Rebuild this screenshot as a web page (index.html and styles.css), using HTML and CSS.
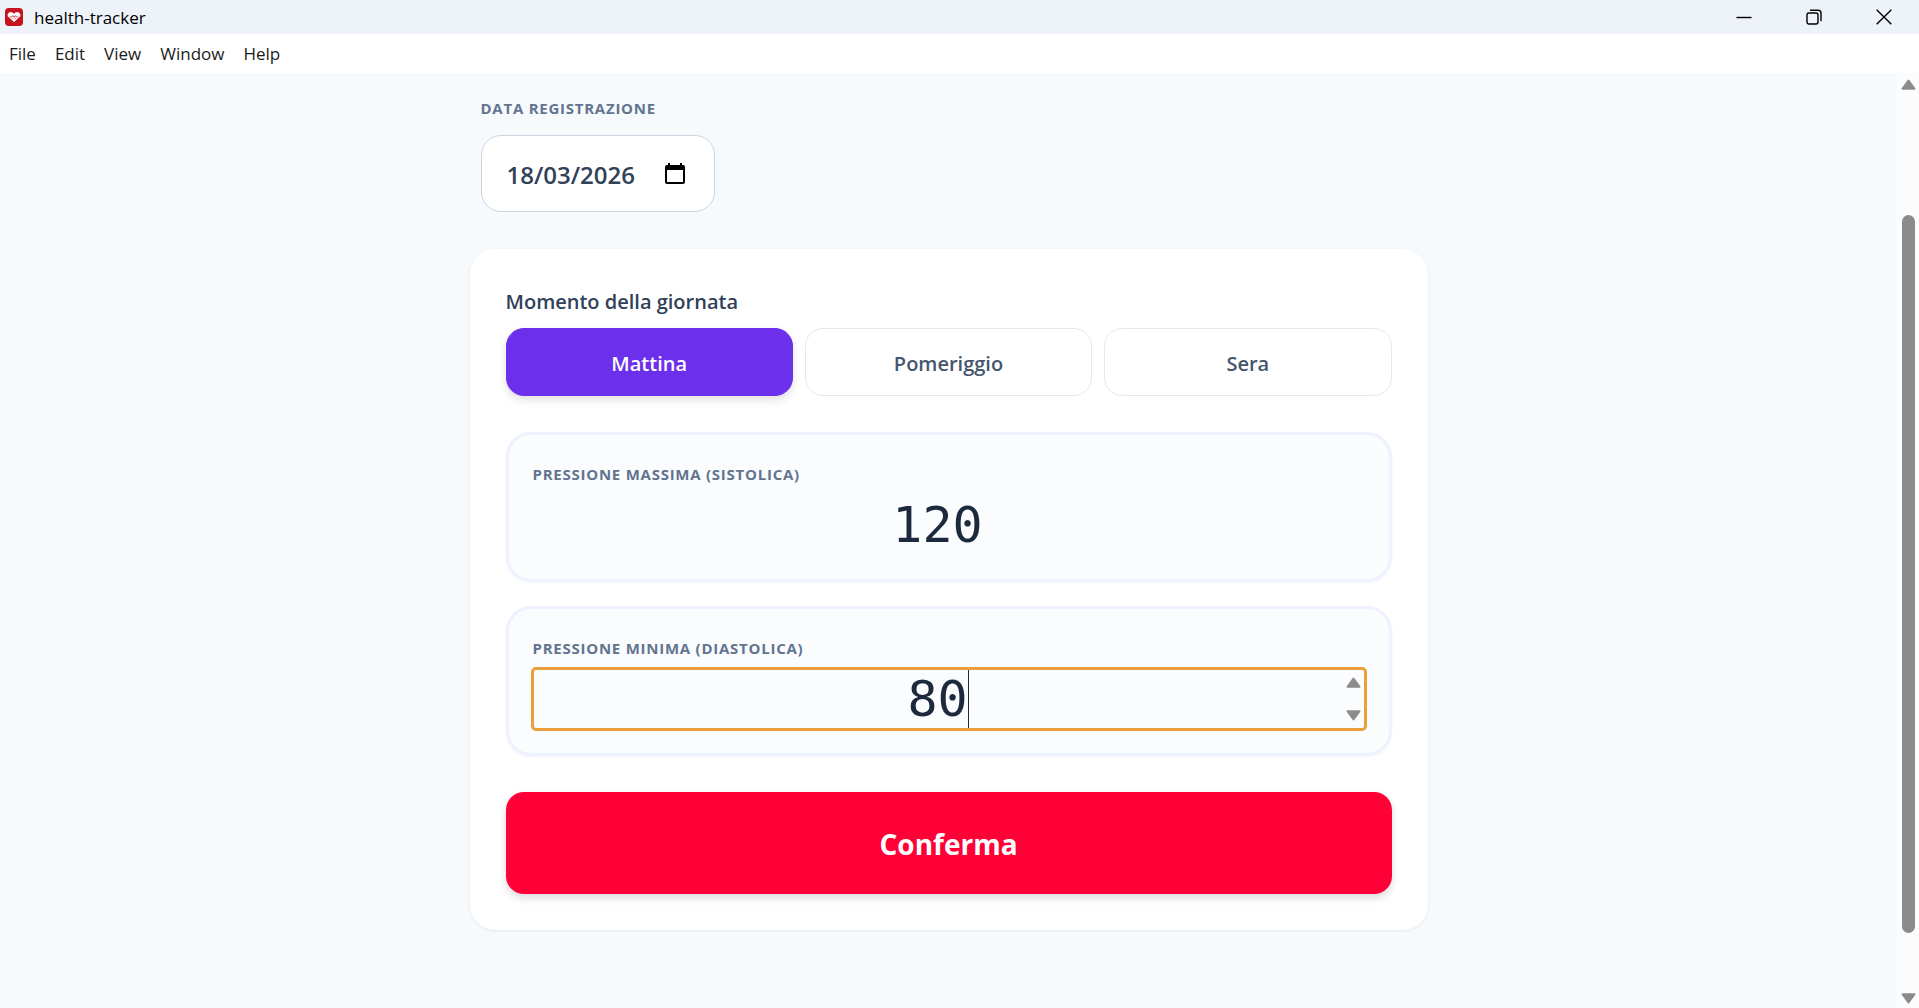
FILE: index.html
```html
<!DOCTYPE html>
<html lang="it">
<head>
<meta charset="utf-8">
<meta name="viewport" content="width=device-width, initial-scale=1">
<title>health-tracker</title>
<link rel="stylesheet" href="styles.css">
</head>
<body>
<header class="titlebar">
  <svg class="app-icon" viewBox="0 0 19 19" aria-hidden="true">
    <rect width="19" height="19" rx="4" fill="#c4141f"/>
    <path d="M4.500 4.500h3l2 1.500 2-1.500h3l1.700 2v2.300L9.500 14.800 2.800 8.800V6.500z" fill="#fff"/>
    <path d="M5 9.500h2l1.200-1.500 1.300 2 1.300-2 1.200 1.500h2M7.500 11l1 1M10.500 11.500l1-1" fill="none" stroke="#c4141f" stroke-width=".8"/>
  </svg>
  <h1 class="app-name">health-tracker</h1>
  <div class="window-controls">
    <button class="window-button" type="button" aria-label="Riduci a icona">
      <svg viewBox="0 0 16 16"><path d="M.5 8.500h15"/></svg>
    </button>
    <button class="window-button" type="button" aria-label="Ripristina">
      <svg viewBox="0 0 16 16"><rect x="1" y="4" width="11" height="11" rx="2"/><path d="M4 1.200h8a3 3 0 0 1 3 3v8"/></svg>
    </button>
    <button class="window-button" type="button" aria-label="Chiudi">
      <svg viewBox="0 0 16 16"><path d="M.7.7l14.600 14.600M15.300.7L.7 15.300"/></svg>
    </button>
  </div>
</header>
<nav class="menubar">
  <button class="menu-item" type="button">File</button>
  <button class="menu-item" type="button">Edit</button>
  <button class="menu-item" type="button">View</button>
  <button class="menu-item" type="button">Window</button>
  <button class="menu-item" type="button">Help</button>
</nav>
<div class="viewport">
  <main class="page">
    <form class="form">
      <div class="date-block">
        <label class="caption" for="date">DATA REGISTRAZIONE</label>
        <div class="date-field">
          <input class="date-input" id="date" type="text" inputmode="numeric" value="18/03/2026">
          <button class="date-picker" type="button" aria-label="Apri calendario">
            <svg viewBox="0 0 20 22"><path fill-rule="evenodd" d="M3 0h2v2h10V0h2v2h1a2 2 0 0 1 2 2v15a2 2 0 0 1-2 2H2a2 2 0 0 1-2-2V4a2 2 0 0 1 2-2h1zM2 7v12h16V7z"/></svg>
          </button>
        </div>
      </div>
      <section class="card">
        <fieldset class="moment">
          <legend class="moment-title">Momento della giornata</legend>
          <div class="moment-options">
            <button class="option option-active" type="button" aria-pressed="true">Mattina</button>
            <button class="option" type="button" aria-pressed="false">Pomeriggio</button>
            <button class="option" type="button" aria-pressed="false">Sera</button>
          </div>
        </fieldset>
        <div class="readings">
          <div class="reading">
            <label class="caption" for="sys">PRESSIONE MASSIMA (SISTOLICA)</label>
            <div class="number-field">
              <input class="number-input" id="sys" type="number" value="120">
            </div>
          </div>
          <div class="reading">
            <label class="caption" for="dia">PRESSIONE MINIMA (DIASTOLICA)</label>
            <div class="number-field number-field-focus">
              <input class="number-input" id="dia" type="number" value="80">
              <span class="caret"></span>
              <div class="spinner">
                <button class="spin" type="button" aria-label="Aumenta"><svg viewBox="0 0 15 11"><path d="M7.500 1.500L13.500 9.800h-12z"/></svg></button>
                <button class="spin" type="button" aria-label="Diminuisci"><svg viewBox="0 0 15 11"><path d="M7.500 9.500L1.500 1.200h12z"/></svg></button>
              </div>
            </div>
          </div>
        </div>
        <button class="confirm" type="submit">Conferma</button>
      </section>
    </form>
  </main>
  <div class="scrollbar" aria-hidden="true">
    <svg class="scroll-arrow" viewBox="0 0 15 11"><path d="M7.500 1.500L13.500 9.800h-12z"/></svg>
    <div class="scroll-track"><div class="scroll-thumb"></div></div>
    <svg class="scroll-arrow" viewBox="0 0 15 11"><path d="M7.500 9.500L1.500 1.200h12z"/></svg>
  </div>
</div>
</body>
</html>
```

FILE: styles.css
```css
* {
  box-sizing: border-box;
}

body {
  display: flex;
  flex-direction: column;
  height: 100vh;
  margin: 0;
  overflow: hidden;
  background: #fff;
  color: #314158;
  font-family: "Segoe UI", "Open Sans", "Noto Sans", sans-serif;
}

button,
input {
  margin: 0;
  padding: 0;
  border: 0;
  background: none;
  color: inherit;
  font: inherit;
}

svg {
  display: block;
}

/* Window chrome */
.titlebar {
  display: flex;
  flex: none;
  align-items: center;
  height: 34px;
  padding-left: 5px;
  background: #eef2f9;
}

.app-icon {
  width: 18px;
  height: 18px;
}

.app-name {
  margin: 0 auto 0 11px;
  color: #000;
  font-size: 17px;
  font-weight: 400;
}

.window-controls {
  display: flex;
}

.window-button {
  display: grid;
  place-items: center;
  width: 70px;
  height: 34px;
}

.window-button svg {
  width: 16px;
  height: 16px;
  fill: none;
  stroke: #000;
  stroke-width: 1.4;
}

.menubar {
  display: flex;
  flex: none;
  gap: 1px;
  align-items: center;
  height: 39px;
}

.menu-item {
  height: 39px;
  padding: 0 9px;
  color: #1b1b1b;
  font-size: 17px;
}

/* Scrolling area */
.viewport {
  display: flex;
  flex: 1;
  min-height: 0;
}

.page {
  flex: 1;
  padding: 23px 32px 0;
  overflow: hidden;
  background: #f6fafd;
}

.scrollbar {
  display: flex;
  flex-direction: column;
  flex: none;
  align-items: center;
  width: 22px;
  padding: 6px 0 4px;
  background: #fcfcfc;
}

.scroll-arrow,
.spin svg {
  width: 15px;
  height: 11px;
  fill: #8b8b8b;
  stroke: #8b8b8b;
  stroke-width: 2;
  stroke-linejoin: round;
}

.scroll-track {
  flex: 1;
  padding: 125px 0 60px;
}

.scroll-thumb {
  width: 13px;
  height: 100%;
  border-radius: 7px;
  background: #8b8b8b;
}

/* Form */
.form {
  max-width: 958px;
  margin: 0 auto;
}

.caption {
  display: block;
  color: #62748e;
  font-size: 15px;
  font-weight: 700;
  line-height: 24px;
  letter-spacing: 0.05em;
}

.date-block {
  padding: 0 11px;
}

.date-field {
  display: flex;
  align-items: center;
  justify-content: space-between;
  width: 234px;
  height: 77px;
  margin-top: 15px;
  padding: 0 29px 0 25px;
  border: 1px solid #cad5e2;
  border-radius: 20px;
  background: #fff;
}

.date-input {
  width: 140px;
  height: 42px;
  padding-top: 2px;
  font-size: 24px;
  font-weight: 600;
}

.date-picker svg {
  width: 20px;
  height: 22px;
}

.card {
  margin-top: 37px;
  padding: 36px;
  border-radius: 25px;
  background: #fff;
  box-shadow: 0 1px 3px rgba(15, 23, 43, 0.08);
}

.moment {
  margin: 0;
  padding: 0;
  border: 0;
}

.moment-title {
  padding: 0;
  font-size: 20px;
  font-weight: 600;
  line-height: 33px;
}

.moment-options {
  display: grid;
  grid-template-columns: repeat(3, 1fr);
  gap: 12px;
  padding-top: 10px;
}

.option {
  height: 68px;
  padding-top: 2px;
  border: 1px solid #e2e8f0;
  border-radius: 18px;
  background: #fff;
  color: #45556c;
  font-size: 20px;
  font-weight: 600;
}

.option-active {
  border-color: #6c2fec;
  background: #6c2fec;
  box-shadow: 0 4px 8px rgba(0, 0, 0, 0.12);
  color: #fff;
}

.readings {
  display: grid;
  gap: 24px;
  margin: 36px 0;
}

.reading {
  height: 150px;
  padding: 27px 24px 0;
  border: 3px solid #eef1fe;
  border-radius: 25px;
  background: #fbfcfe;
  box-shadow: 0 1px 3px rgba(79, 57, 246, 0.05);
}

.number-field {
  position: relative;
  height: 60px;
  margin-top: 9px;
  color: #1d293d;
  font: 50px "DejaVu Sans Mono", monospace;
}

.number-field-focus {
  border-radius: 3px;
  outline: 3px solid #e9a03a;
  outline-offset: -1px;
}

.number-input {
  width: 100%;
  height: 100%;
  padding-right: 22px;
  outline: none;
  text-align: center;
  appearance: textfield;
}

.number-input::-webkit-inner-spin-button {
  display: none;
}

.caret {
  position: absolute;
  top: 1px;
  bottom: 1px;
  left: calc(50% - 11px + 1ch);
  width: 1px;
  background: #1d293d;
}

.spinner {
  position: absolute;
  top: 0;
  right: 4px;
  display: flex;
  flex-direction: column;
  justify-content: space-between;
  height: 100%;
  padding: 8px 0;
}

.confirm {
  width: 100%;
  height: 102px;
  padding-top: 2px;
  border-radius: 18px;
  background: #ff0037;
  box-shadow: 0 4px 8px rgba(0, 0, 0, 0.14);
  color: #fff;
  font-size: 28px;
  font-weight: 700;
}
```
